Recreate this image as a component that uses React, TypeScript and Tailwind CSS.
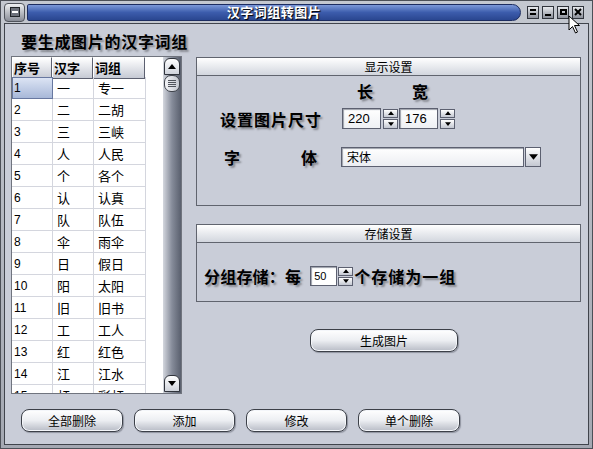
import React from 'react';

const rows: [string, string, string][] = [
    ['1', '一', '专一'],
    ['2', '二', '二胡'],
    ['3', '三', '三峡'],
    ['4', '人', '人民'],
    ['5', '个', '各个'],
    ['6', '认', '认真'],
    ['7', '队', '队伍'],
    ['8', '伞', '雨伞'],
    ['9', '日', '假日'],
    ['10', '阳', '太阳'],
    ['11', '旧', '旧书'],
    ['12', '工', '工人'],
    ['13', '红', '红色'],
    ['14', '江', '江水'],
    ['15', '虹', '彩虹'],
];

const cjk = "font-['Noto_Sans_CJK_SC',sans-serif]";
const label = "font-['Noto_Sans_CJK_SC',sans-serif] font-bold text-black [text-shadow:2px_2px_2px_rgba(0,0,0,0.35)]";

function Tri({ down = false, size = 7 }: { down?: boolean; size?: number }) {
    return (
        <svg width={size} height={Math.ceil(size / 2) + 1} viewBox="0 0 8 5">
            {down ? <path d="M0 0 H8 L4 5 Z" fill="#000" /> : <path d="M0 5 H8 L4 0 Z" fill="#000" />}
        </svg>
    );
}

function SpinButtons({ h = 20 }: { h?: number }) {
    return (
        <div className="flex flex-col gap-[1px] w-[15px]" style={{ height: h }}>
            <div className="flex-1 border border-[#5c6070] bg-gradient-to-b from-white to-[#c4c8d2] flex items-center justify-center">
                <Tri size={6} />
            </div>
            <div className="flex-1 border border-[#5c6070] bg-gradient-to-b from-white to-[#c4c8d2] flex items-center justify-center">
                <Tri down size={6} />
            </div>
        </div>
    );
}

function Field({ value, w }: { value: string; w: number }) {
    return (
        <div
            className="h-[21px] border border-[#5c6070] bg-gradient-to-b from-white to-[#eef0f4] shadow-[inset_1px_1px_1px_#9ca0aa] flex items-center pl-[5px] text-[13px] text-black font-['Liberation_Sans',sans-serif]"
            style={{ width: w }}
        >
            {value}
        </div>
    );
}

function Panel({ title, h, children }: { title: string; h: number; children: React.ReactNode }) {
    return (
        <div className="border border-[#60646e] flex flex-col" style={{ height: h }}>
            <div className={`h-[18px] shrink-0 border-b border-[#60646e] bg-gradient-to-b from-white to-[#d2d6de] flex items-center justify-center text-[12px] text-black ${cjk}`}>
                {title}
            </div>
            <div className="flex-1">{children}</div>
        </div>
    );
}

function PillButton({ text, w }: { text: string; w: number }) {
    return (
        <button
            className={`h-[23px] rounded-[8px] border border-[#3c4048] bg-gradient-to-b from-white via-[#eceef2] to-[#b8bcc6] shadow-[inset_0_0_0_1px_#f4f6fa,1px_1px_1px_#9094a0] text-[12px] text-black ${cjk} flex items-center justify-center`}
            style={{ width: w }}
        >
            {text}
        </button>
    );
}

function TitleBtn({ children }: { children: React.ReactNode }) {
    return (
        <div className="w-[12px] h-[13px] border border-[#30343c] bg-gradient-to-b from-[#e8eaee] to-[#8c909a] flex items-center justify-center">
            {children}
        </div>
    );
}

export default function App() {
    return (
        <div className="relative w-[593px] h-[449px] overflow-hidden bg-gradient-to-b from-[#c4c8d0] to-[#a4a8b2] border border-[#4c5058] flex flex-col px-[3px] pb-[3px]">
            {/* Title bar */}
            <div className="h-[22px] shrink-0 flex items-center">
                <div className="w-[21px] h-[19px] rounded-[4px] border border-[#50545c] bg-gradient-to-b from-[#eef0f2] to-[#8a8e98] flex items-center justify-center">
                    <div className="w-[10px] h-[10px] border border-[#202428] bg-[#6c707a] flex items-center justify-center">
                        <div className="w-[6px] h-[2px] bg-white" />
                    </div>
                </div>
                <div className="ml-[2px] w-[494px] h-[17px] rounded-r-[9px] rounded-l-[2px] border border-[#1c2c60] bg-gradient-to-b from-[#7c98d8] via-[#3c5cac] to-[#2a4690] flex items-center justify-center">
                    <span className={`text-[13px] font-bold text-white ${cjk} [text-shadow:1px_1px_1px_#000] tracking-[0.5px]`}>汉字词组转图片</span>
                </div>
                <div className="ml-[6px] flex gap-[3px]">
                    <TitleBtn>
                        <div className="flex flex-col gap-[2px]">
                            <div className="w-[6px] h-[2px] bg-black" />
                            <div className="w-[6px] h-[2px] bg-black" />
                        </div>
                    </TitleBtn>
                    <TitleBtn>
                        <div className="w-[6px] h-[2px] bg-black mt-[6px]" />
                    </TitleBtn>
                    <TitleBtn>
                        <div className="w-[7px] h-[6px] border-2 border-black" />
                    </TitleBtn>
                    <TitleBtn>
                        <svg width="8" height="8" viewBox="0 0 8 8">
                            <path d="M1 1 L7 7 M7 1 L1 7" stroke="#000" strokeWidth="2" />
                        </svg>
                    </TitleBtn>
                </div>
            </div>

            {/* Body */}
            <div className="flex-1 border border-[#40444c] bg-[#c9cdd8] flex flex-col">
                <div className="h-[32px] shrink-0 pl-[16px] pt-[8px]">
                    <div className={`text-[16px] leading-[18px] tracking-[0.7px] ${label}`}>要生成图片的汉字词组</div>
                </div>

                <div className="h-[338px] shrink-0 flex pl-[6px]">
                    {/* Table */}
                    <div className="w-[171px] border border-[#70747e] flex bg-white">
                        <div className="flex-1 overflow-hidden">
                            <div className="grid grid-cols-[40px_41px_52px] h-[20px]">
                                {['序号', '汉字', '词组'].map(h => (
                                    <div
                                        key={h}
                                        className={`border border-[#5c6070] border-t-white border-l-white bg-gradient-to-b from-white to-[#c6cad4] flex items-center pl-[1px] text-[13px] font-bold text-black ${cjk}`}
                                    >
                                        {h}
                                    </div>
                                ))}
                            </div>
                            {rows.map((r, i) => (
                                <div key={r[0]} className="grid grid-cols-[41px_41px_52px] h-[22px]">
                                    <div
                                        className={
                                            i === 0
                                                ? "border border-[#6878a0] bg-gradient-to-b from-[#dce4f4] to-[#a8b8d8] flex items-center pl-[1px] text-[12px] text-black font-['Liberation_Sans',sans-serif]"
                                                : "border-r border-b border-[#d4d6de] flex items-center pl-[2px] text-[12px] text-black font-['Liberation_Sans',sans-serif]"
                                        }
                                    >
                                        {r[0]}
                                    </div>
                                    <div className={`border-r border-b border-[#d4d6de] flex items-center pl-[4px] text-[13px] text-black ${cjk}`}>{r[1]}</div>
                                    <div className={`border-r border-b border-[#d4d6de] flex items-center pl-[4px] text-[13px] text-black ${cjk}`}>{r[2]}</div>
                                </div>
                            ))}
                        </div>
                        {/* Scrollbar */}
                        <div className="w-[18px] shrink-0 flex flex-col bg-gradient-to-r from-[#d4d7de] via-[#868c9a] to-[#5a606e]">
                            <div className="h-[17px] mx-[1px] mt-[1px] rounded-t-[6px] border border-[#30343c] bg-gradient-to-b from-white to-[#d0d4dc] flex items-center justify-center">
                                <Tri size={8} />
                            </div>
                            <div className="h-[17px] mx-[1px] rounded-[7px] border border-[#40444c] bg-gradient-to-r from-[#f4f5f8] to-[#c4c8d0] flex flex-col items-center justify-center gap-[1px]">
                                <div className="w-[8px] h-[1px] bg-[#50545c]" />
                                <div className="w-[8px] h-[1px] bg-[#50545c]" />
                                <div className="w-[8px] h-[1px] bg-[#50545c]" />
                                <div className="w-[8px] h-[1px] bg-[#50545c]" />
                            </div>
                            <div className="flex-1" />
                            <div className="h-[17px] mx-[1px] mb-[1px] rounded-t-[6px] border border-[#30343c] bg-gradient-to-b from-white to-[#d0d4dc] flex items-center justify-center">
                                <Tri down size={8} />
                            </div>
                        </div>
                    </div>

                    {/* Right side */}
                    <div className="ml-[14px] w-[385px] pt-[1px] flex flex-col">
                        <Panel title="显示设置" h={149}>
                            <div className="flex flex-col">
                                <div className="h-[24px] flex items-end">
                                    <span className={`ml-[160px] text-[16px] leading-[18px] ${label}`}>长</span>
                                    <span className={`ml-[39px] text-[16px] leading-[18px] ${label}`}>宽</span>
                                </div>
                                <div className="mt-[8px] h-[21px] flex items-center">
                                    <span className={`ml-[23px] w-[122px] text-[16px] tracking-[1px] ${label}`}>设置图片尺寸</span>
                                    <Field value="220" w={39} />
                                    <div className="ml-[2px]"><SpinButtons /></div>
                                    <div className="ml-[1px]"><Field value="176" w={39} /></div>
                                    <div className="ml-[2px]"><SpinButtons /></div>
                                </div>
                                <div className="mt-[18px] h-[20px] flex items-center">
                                    <span className={`ml-[27px] text-[16px] ${label}`}>字</span>
                                    <span className={`ml-[61px] w-[40px] text-[16px] ${label}`}>体</span>
                                    <div className={`ml-[0px] w-[183px] h-[20px] border border-[#5c6070] bg-gradient-to-b from-white to-[#eceef2] shadow-[inset_1px_1px_1px_#9ca0aa] flex items-center pl-[5px] text-[12px] text-black ${cjk}`}>
                                        宋体
                                    </div>
                                    <div className="ml-[1px] w-[16px] h-[20px] border border-[#5c6070] bg-gradient-to-b from-white to-[#c4c8d2] flex items-center justify-center">
                                        <Tri down size={9} />
                                    </div>
                                </div>
                            </div>
                        </Panel>

                        <div className="mt-[18px]">
                            <Panel title="存储设置" h={78}>
                                <div className="pt-[21px] pl-[7px] flex items-center">
                                    <span className={`text-[16px] tracking-[0.2px] ${label}`}>分组存储：每</span>
                                    <div className="ml-[9px] w-[27px] h-[20px] border border-[#5c6070] bg-white shadow-[inset_1px_1px_1px_#9ca0aa] flex items-center pl-[3px] text-[11px] text-black font-['Liberation_Sans',sans-serif]">
                                        50
                                    </div>
                                    <div className="ml-[1px]"><SpinButtons h={19} /></div>
                                    <span className={`ml-[1px] text-[16px] tracking-[1px] ${label}`}>个存储为一组</span>
                                </div>
                            </Panel>
                        </div>

                        <div className="mt-[27px] pl-[114px]">
                            <PillButton text="生成图片" w={148} />
                        </div>
                    </div>
                </div>

                {/* Bottom buttons */}
                <div className="mt-[15px] pl-[16px] flex gap-[11px]">
                    <PillButton text="全部删除" w={102} />
                    <PillButton text="添加" w={101} />
                    <PillButton text="修改" w={101} />
                    <PillButton text="单个删除" w={102} />
                </div>
            </div>

            {/* Mouse cursor */}
            <svg className="absolute left-[567px] top-[14px]" width="14" height="20" viewBox="0 0 14 20">
                <path d="M1 1 L1 15 L4.5 11.5 L7.5 18 L9.5 17 L6.5 10.5 L11.5 10.5 Z" fill="#fff" stroke="#000" strokeWidth="1" strokeLinejoin="round" />
            </svg>
        </div>
    );
}
